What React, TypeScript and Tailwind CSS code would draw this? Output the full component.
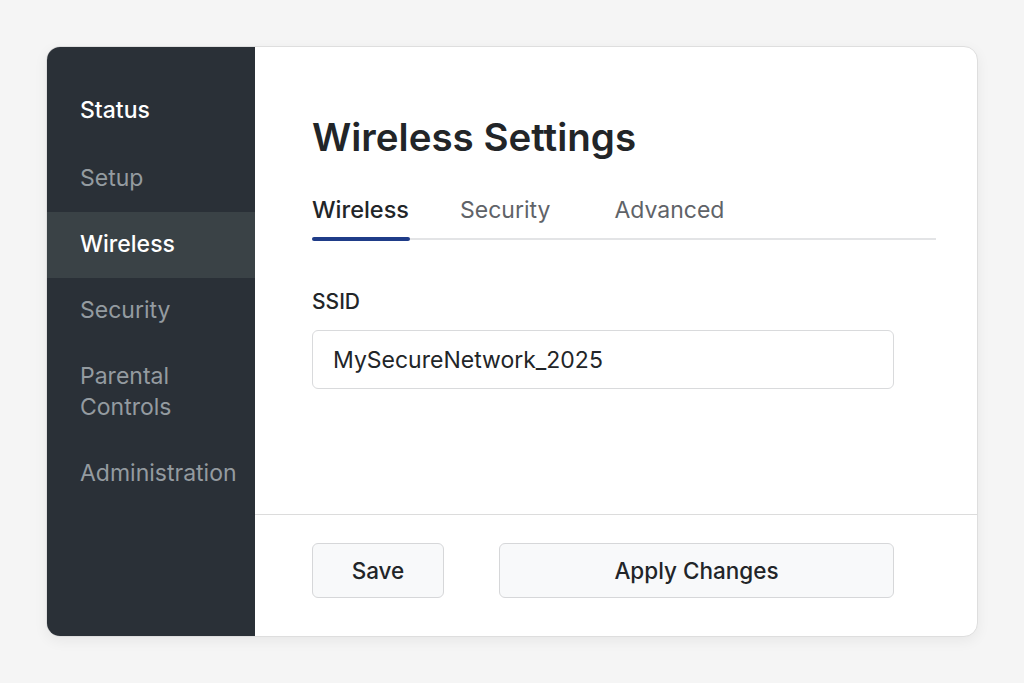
const navItems = ["Status", "Setup", "Wireless", "Security", "Parental Controls", "Administration"];

export default function App() {
  const active = "Wireless";

  return (
    <div
      className="min-h-screen w-full bg-[#f5f5f5] pt-[46px] pl-[46px]"
      style={{ fontFamily: "Inter, 'Noto Sans', sans-serif" }}
    >
      <div className="flex h-[591px] w-[932px] overflow-hidden rounded-[14px] border border-[#dedede] bg-white shadow-[0_4px_14px_rgba(0,0,0,0.06)]">
        <aside className="w-[208px] shrink-0 bg-[#2a3037] pt-[30px]">
          {navItems.map((item) => (
            <div
              key={item}
              className={`pl-[33px] pr-2 text-[23px] leading-[31px] ${
                item === "Status" ? "pt-[17.5px] pb-[20px]" : "py-[17.5px]"
              } ${
                item === active
                  ? "bg-[#3a4246] font-medium text-white"
                  : item === "Status"
                  ? "font-medium text-white"
                  : "text-[#949ba0]"
              }`}
            >
              {item === "Parental Controls" ? (
                <>
                  Parental
                  <br />
                  Controls
                </>
              ) : (
                item
              )}
            </div>
          ))}
        </aside>

        <main className="flex flex-1 flex-col">
          <div className="flex-1 pl-[57px] pr-[41px] pt-[68px]">
            <h1 className="text-[38.5px] font-semibold leading-[44px] text-[#222528]">
              Wireless Settings
            </h1>

            <div className="mt-[36px] flex border-b-2 border-[#e3e4e6]">
              <button className="relative mr-[51px] pb-[13px] text-[23.5px] font-medium leading-[30px] text-[#222528]">
                Wireless
                <span className="absolute -bottom-[3px] left-0 h-[4px] w-[98px] rounded-full bg-[#1f3c88]" />
              </button>
              <button className="mr-[64px] pb-[13px] text-[23px] leading-[30px] text-[#5f6368]">
                Security
              </button>
              <button className="pb-[13px] text-[23px] leading-[30px] text-[#5f6368]">
                Advanced
              </button>
            </div>

            <label className="mt-[48px] block text-[21px] font-medium leading-[28px] text-[#222528]">
              SSID
            </label>
            <input
              defaultValue="MySecureNetwork_2025"
              className="mt-[14px] block h-[59px] w-[582px] rounded-[6px] border border-[#d9dadc] bg-white px-[20px] text-[23px] text-[#222528] outline-none"
            />
          </div>

          <div className="flex h-[122px] shrink-0 gap-[55px] border-t border-[#dcdcdc] pl-[57px] pt-[28px]">
            <button className="h-[55px] w-[132px] rounded-[6px] border border-[#d6d7d9] bg-[#f8f9fa] text-[22.5px] font-medium text-[#222528]">
              Save
            </button>
            <button className="h-[55px] w-[395px] rounded-[6px] border border-[#d6d7d9] bg-[#f8f9fa] text-[22.5px] font-medium text-[#222528]">
              Apply Changes
            </button>
          </div>
        </main>
      </div>
    </div>
  );
}
